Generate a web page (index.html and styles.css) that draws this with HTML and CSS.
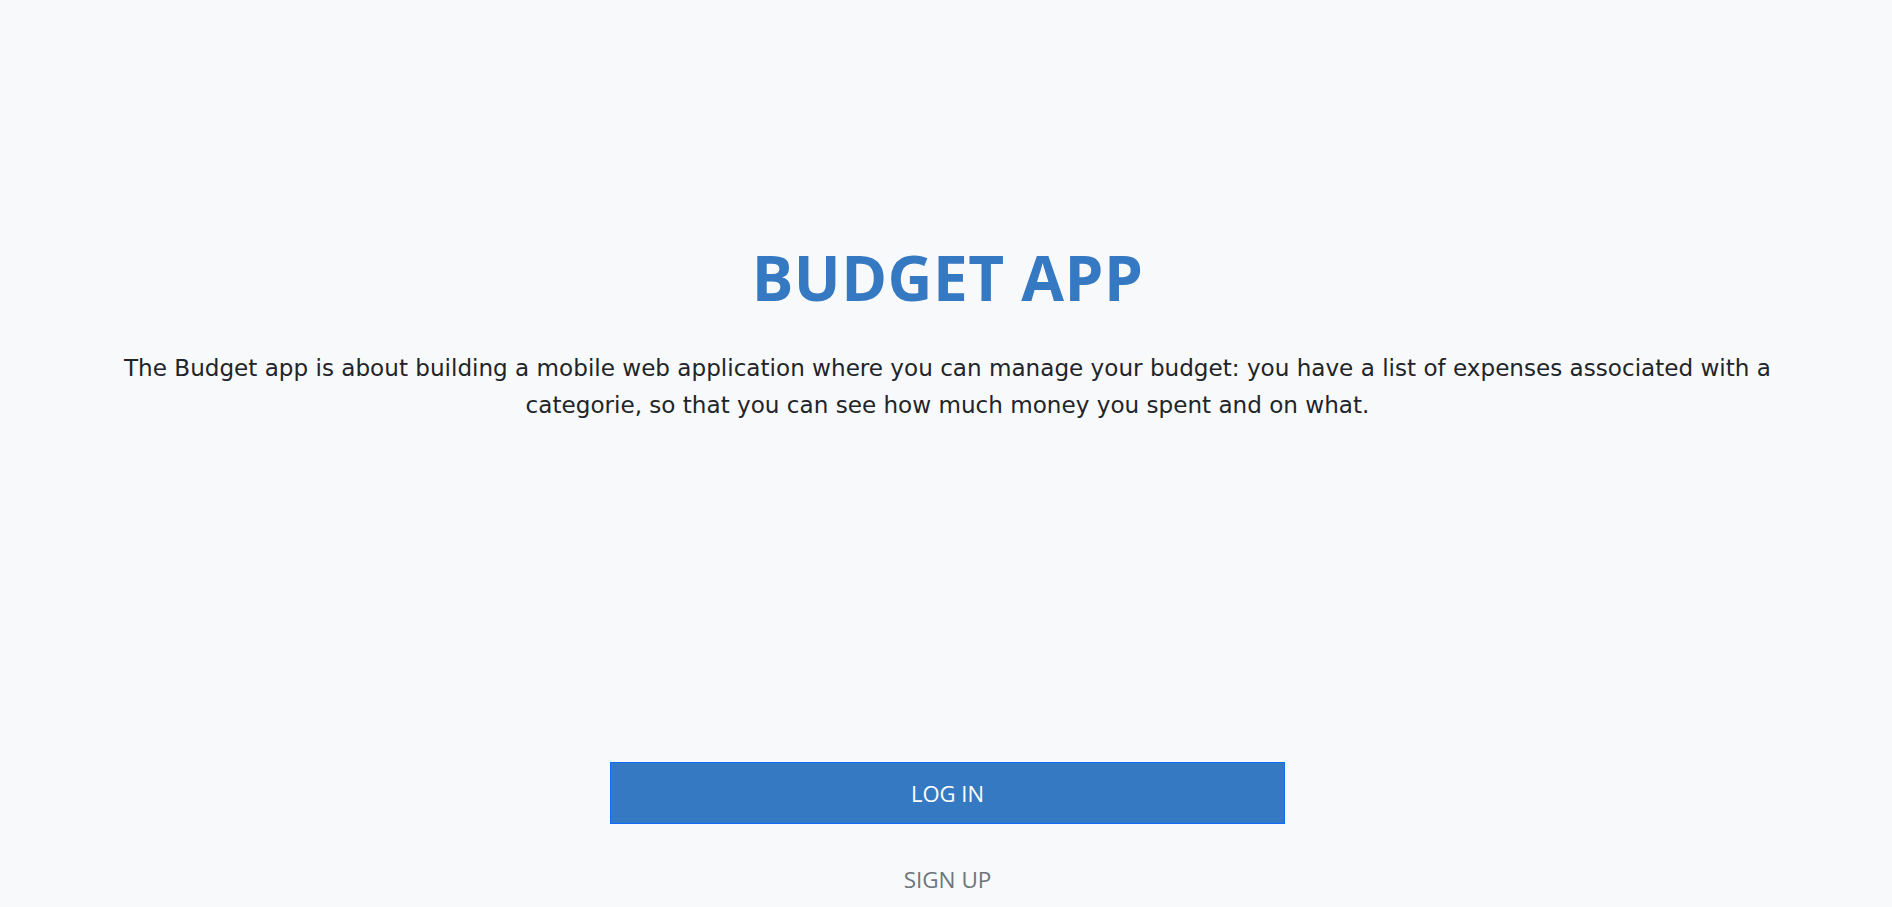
FILE: index.html
```html
<!DOCTYPE html>
<html lang="en">
<head>
<meta charset="utf-8">
<title>Budget App</title>
<link rel="stylesheet" href="styles.css">
</head>
<body>
<main class="splash">
  <section class="intro">
    <h1 class="title">BUDGET APP</h1>
    <p class="lead">The Budget app is about building a mobile web application where you can manage your budget: you have a list of expenses associated with a categorie, so that you can see how much money you spent and on what.</p>
  </section>
  <nav class="actions">
    <a class="btn-login" href="#">LOG IN</a>
    <a class="btn-signup" href="#">SIGN UP</a>
  </nav>
</main>
</body>
</html>
```

FILE: styles.css
```css
html, body {
  margin: 0;
  padding: 0;
}
body {
  background: #f8f9fa;
  height: 907px;
  overflow: hidden;
}
.splash {
  display: flex;
  flex-direction: column;
  align-items: center;
  padding-left: 3px;
}
.intro {
  display: flex;
  flex-direction: column;
  align-items: center;
  padding-top: 241px;
}
.title {
  margin: 0;
  font-family: "Open Sans", sans-serif;
  font-weight: 700;
  font-size: 62px;
  line-height: 73px;
  letter-spacing: 0.5px;
  color: #3679c3;
}
.lead {
  margin: 36px 0 0;
  max-width: 1700px;
  text-align: center;
  font-family: "DejaVu Sans", sans-serif;
  font-size: 23.1px;
  line-height: 37px;
  color: #212529;
}
.actions {
  display: flex;
  flex-direction: column;
  align-items: center;
  margin-top: 338px;
}
.btn-login {
  box-sizing: border-box;
  width: 675px;
  height: 62px;
  display: flex;
  align-items: center;
  justify-content: center;
  background: #3679c3;
  border: 1px solid #0d6efd;
  color: #ffffff;
  text-decoration: none;
  font-family: "Open Sans", sans-serif;
  font-size: 22px;
}
.btn-signup {
  margin-top: 39px;
  color: #6c757d;
  text-decoration: none;
  font-family: "Open Sans", sans-serif;
  font-size: 22.5px;
  line-height: 33px;
}
```
